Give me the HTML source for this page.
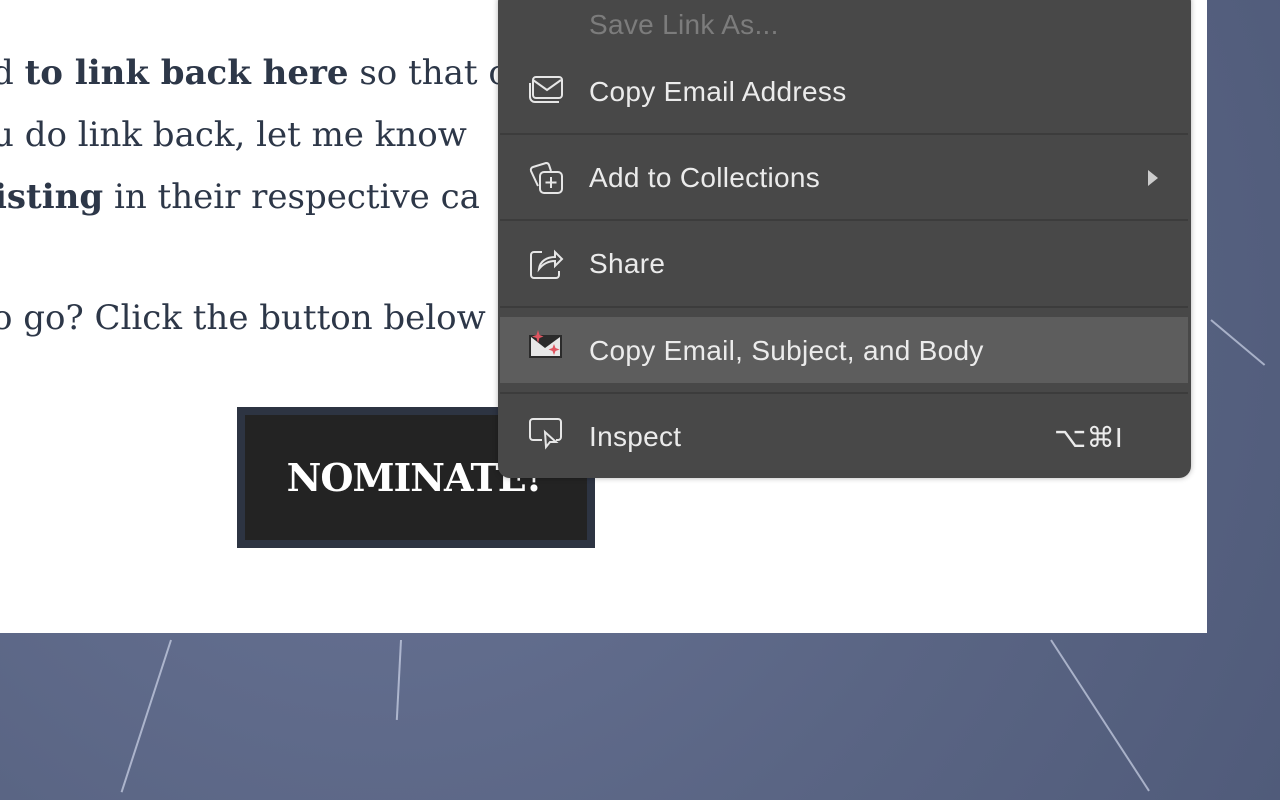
<!DOCTYPE html>
<html><head><style>
body{margin:0;width:1280px;height:800px;overflow:hidden;position:relative;background:#5d6888;font-family:"Liberation Sans",sans-serif}
.bg{position:absolute;inset:0;background:radial-gradient(circle at 30% 40%,#6a7597,#5a6584 60%,#505b7a)}
.streak{position:absolute;width:2px;background:rgba(225,232,250,.6);transform-origin:top}
.page{position:absolute;left:0;top:0;width:1207px;height:633px;background:#fff}
.t{position:absolute;left:0;font-family:"DejaVu Serif",serif;font-size:34px;color:#2d3748;white-space:nowrap}
.t b{font-weight:bold}
.btn{position:absolute;left:237px;top:407px;width:358px;height:141px;background:#2d3442;box-sizing:border-box;padding:8px}
.btn div{background:#232323;width:100%;height:100%;display:flex;align-items:center;justify-content:center;color:#fff;font-family:"DejaVu Serif",serif;font-weight:900;font-size:38px;letter-spacing:-1px;box-sizing:border-box;padding-right:4px}
.menu{position:absolute;left:498px;top:-10px;width:693px;height:488px;background:#484848;border-radius:12px;box-shadow:0 0 6px rgba(0,0,0,.3)}
.it{position:absolute;left:91px;font-size:28px;letter-spacing:.3px;color:#ebebeb;white-space:nowrap}
.sep{position:absolute;left:2px;width:688px;height:2px;background:#3c3c3c}
.hl{position:absolute;left:2px;top:327px;width:688px;height:66px;background:#5d5d5d}
svg{position:absolute}
</style></head><body>
<div class="bg"></div>
<div class="streak" style="left:1210px;top:320px;height:70px;transform:rotate(-50deg)"></div>
<div class="streak" style="left:400px;top:640px;height:80px;transform:rotate(3deg)"></div>
<div class="streak" style="left:170px;top:640px;height:160px;transform:rotate(18deg)"></div>
<div class="streak" style="left:1050px;top:640px;height:180px;transform:rotate(-33deg)"></div>
<div class="page">
<div class="t" style="top:53px;left:-8px">d <b>to link back here</b> so that o</div>
<div class="t" style="top:115px;left:-8px">u do link back, let me know</div>
<div class="t" style="top:177px;left:-6px"><b>isting</b> in their respective ca</div>
<div class="t" style="top:298px;left:-8px">o go? Click the button below</div>
<div class="btn"><div>NOMINATE!</div></div>
</div>
<div class="menu">
<div class="it" style="top:19px;color:#7c7c7c">Save Link As...</div>
<div class="it" style="top:86px">Copy Email Address</div>
<div class="sep" style="top:143px"></div>
<div class="it" style="top:172px">Add to Collections</div>
<div style="position:absolute;left:650px;top:180px;width:0;height:0;border-left:10px solid #ccc;border-top:8px solid transparent;border-bottom:8px solid transparent"></div>
<div class="sep" style="top:229px"></div>
<div class="it" style="top:258px">Share</div>
<div class="sep" style="top:316px"></div>
<div class="hl"></div>
<div class="it" style="top:345px">Copy Email, Subject, and Body</div>
<div class="sep" style="top:402px"></div>
<div class="it" style="top:431px">Inspect</div>
<div class="it" style="top:431px;left:556px">⌥⌘I</div>
<svg style="left:30px;top:84px" width="36" height="34" viewBox="0 0 36 34" fill="none" stroke="#e6e6e6" stroke-width="2"><rect x="5" y="3" width="29" height="21" rx="3"/><path d="M5 6l14 10 14-10"/><path d="M2 9v14a5 5 0 0 0 5 5h24"/></svg>
<svg style="left:30px;top:169px" width="36" height="36" viewBox="0 0 36 36" fill="none" stroke="#e6e6e6" stroke-width="2"><path d="M10 27L3 12a3 3 0 0 1 2-4l13-4a3 3 0 0 1 3 2l2 6"/><rect x="12" y="13" width="22" height="21" rx="4"/><path d="M23 18v11M17.5 23.5h11"/></svg>
<svg style="left:30px;top:256px" width="36" height="36" viewBox="0 0 36 36" fill="none" stroke="#e6e6e6" stroke-width="2"><path d="M14 6H6a3 3 0 0 0-3 3v20a3 3 0 0 0 3 3h22a3 3 0 0 0 3-3v-4"/><path d="M11 23c1-8 8-12 16-12V6l7 7-7 7v-5c-7 0-12 3-16 8z"/></svg>
<svg style="left:30px;top:340px" width="36" height="34" viewBox="0 0 36 34"><rect x="1" y="5" width="33" height="23" fill="#2b2b2b"/><rect x="3" y="7" width="29" height="19" fill="#e8e8e8"/><path d="M3 7l14 11 15-11" fill="#2b2b2b"/><path d="M10 0l1.5 5 4 1.5-4 1.5L10 13 8.5 8 4 6.5 8.5 5z M26 14l1.5 4 4 1.5-4 1.5-1.5 4-1.5-4-4-1.5 4-1.5z" fill="#e05560"/></svg>
<svg style="left:30px;top:424px" width="36" height="36" viewBox="0 0 36 36" fill="none" stroke="#e6e6e6" stroke-width="2"><path d="M14 26H5a3 3 0 0 1-3-3V8a3 3 0 0 1 3-3h25a3 3 0 0 1 3 3v15a3 3 0 0 1-3 3h-2"/><path d="M17 18l1 15 4-5 6 0z"/></svg>
</div>
</body></html>
